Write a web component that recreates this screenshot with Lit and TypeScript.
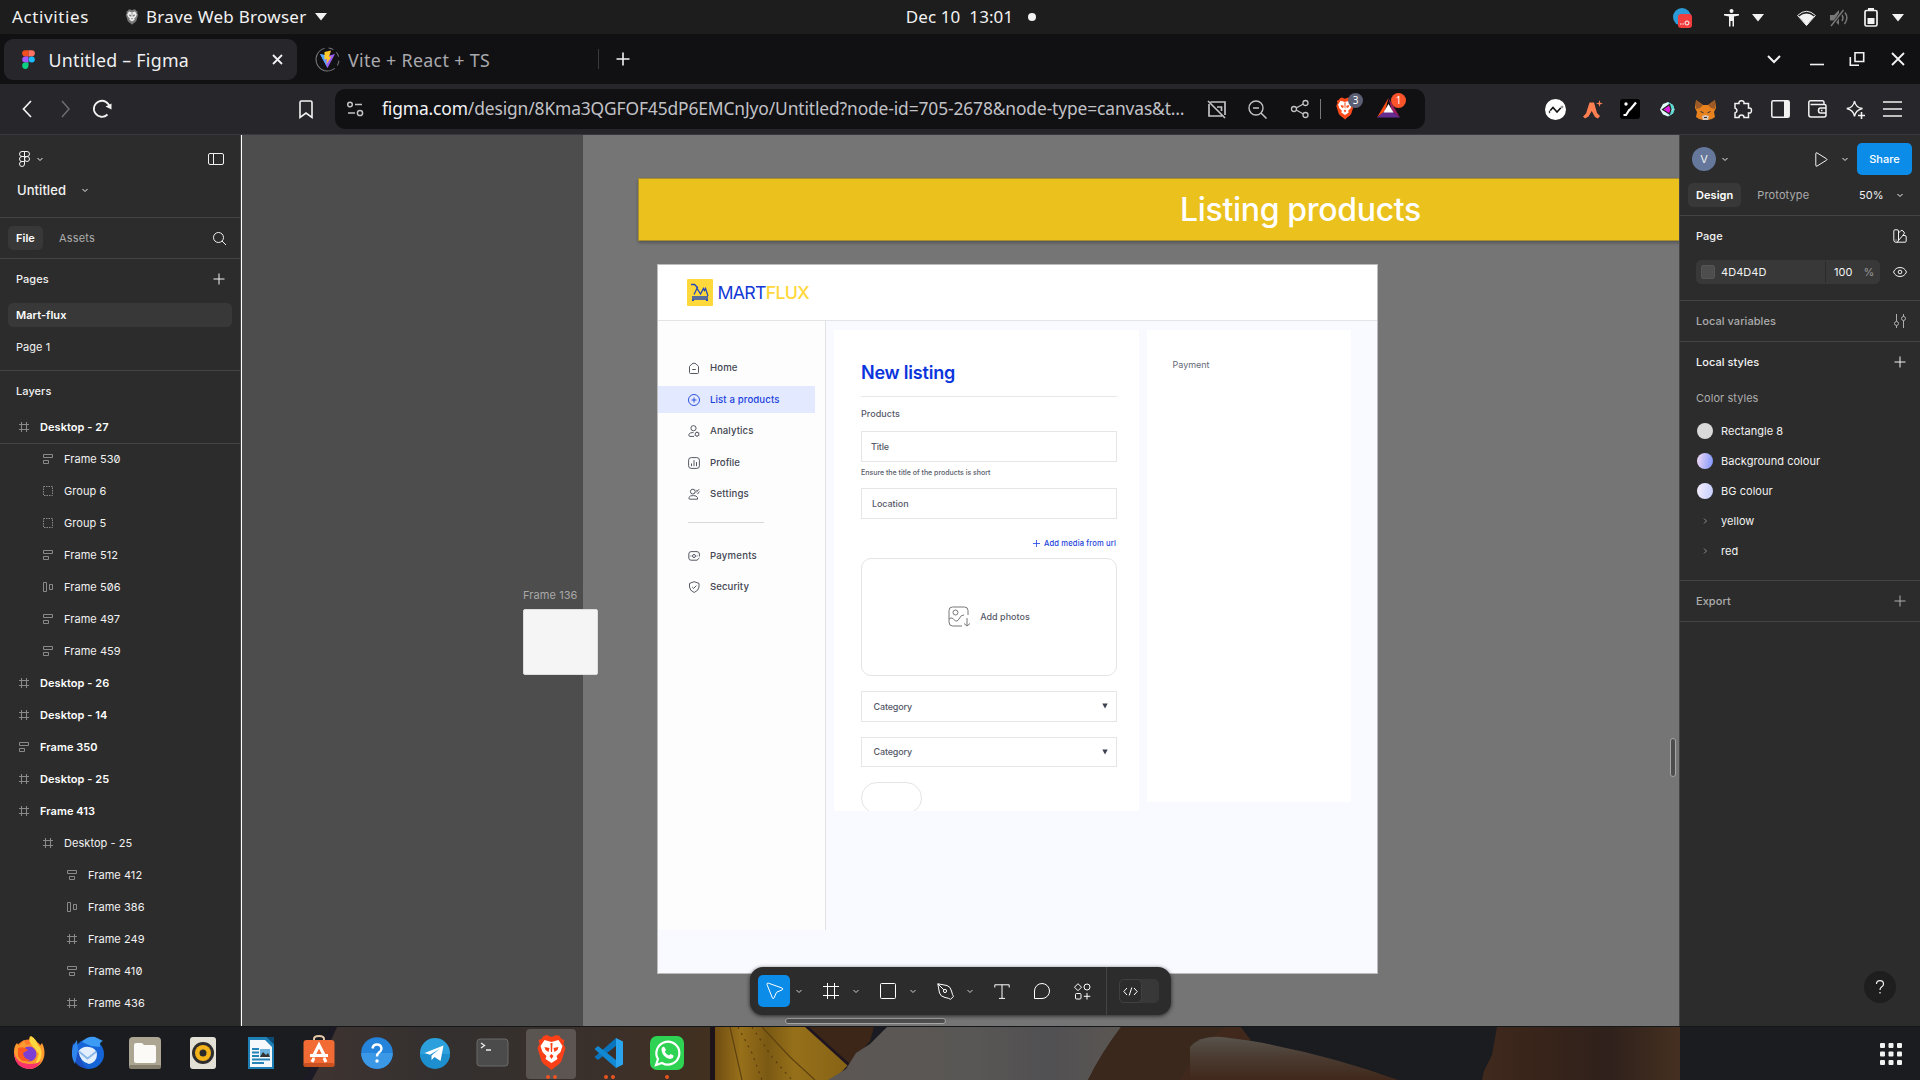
import { LitElement, html, css, svg, TemplateResult } from "lit";
import { customElement, property } from "lit/decorators.js";

/* Label that spreads its letters so that it fills a given width. */
@customElement("fit-text")
class FitText extends LitElement {
  @property({ type: Number }) w = 0;
  static styles = css`
    :host { display: inline-block; white-space: pre; flex-shrink: 0; }
  `;
  render() { return html`<slot></slot>`; }
  firstUpdated() {
    const n = (this.textContent || "").length;
    if (!this.w || !n) return;
    this.style.letterSpacing = "0px";
    const natural = this.getBoundingClientRect().width;
    this.style.letterSpacing = (this.w - natural) / n + "px";
  }
}

const ico = (w: number, h: number, body: TemplateResult | unknown, cls = "") =>
  html`<svg class="ico ${cls}" width=${w} height=${h} viewBox="0 0 ${w} ${h}" fill="none" stroke="currentColor">${body}</svg>`;

const chev = () => ico(8, 8, svg`<path d="M1.5 3 4 5.5 6.5 3"/>`, "chev");
const tri = () => ico(12, 8, svg`<path d="M0 0H12L6 7.5Z" fill="currentColor" stroke="none"/>`);
const plus = () => ico(12, 12, svg`<path d="M6 .5V11.5M.5 6H11.5"/>`, "plus");

const lion = (main: string, bg: string) => svg`
  <path d="M8 1 11 0 16 2 21 0 24 1 26 4 29 5 28 9 30 13 26 26C24 30 20 31 16 35 12 31 8 30 6 26L2 13 4 9 3 5 6 4Z" fill="${bg}" stroke="none"/>
  <path d="M9 5 16 7 23 5 27 11 25 17 21 21 22 24 16 28 10 24 11 21 7 17 5 11Z" fill="${main}" stroke="none"/>
  <path d="M9 12 14 13 13 17 10 15ZM23 12 18 13 19 17 22 15ZM14 21 16 19 18 21 16 24ZM15 8H17L16.6 17H15.4Z" fill="${bg}" stroke="none"/>`;
const brave = (w: number, h: number, main: string, bg: string) =>
  html`<svg class="ico" width=${w} height=${h} viewBox="0 0 32 35">${lion(main, bg)}</svg>`;

const layerIcons: Record<string, unknown> = {
  frame: svg`<path d="M2.500 0V10M7.500 0V10M0 2.500H10M0 7.500H10"/>`,
  left: svg`<path d="M.5 .5H9.500V3.500H.5ZM.5 6.500H5.500V9.500H.5Z"/>`,
  mid: svg`<path d="M.5 .5H9.500V3.500H.5ZM2.500 6.500H7.500V9.500H2.500Z"/>`,
  cols: svg`<path d="M.5 .5H3.500V9.500H.5ZM6.500 2.500H9.500V7.500H6.500Z"/>`,
  group: svg`<rect x=".5" y=".5" width="9" height="9" stroke-dasharray="1.500 1"/>`,
};

const layers: [string, string, number][] = [
  ["frame", "Desktop - 27", 0], ["left", "Frame 530", 1], ["group", "Group 6", 1],
  ["group", "Group 5", 1], ["left", "Frame 512", 1], ["cols", "Frame 506", 1],
  ["left", "Frame 497", 1], ["left", "Frame 459", 1], ["frame", "Desktop - 26", 0],
  ["frame", "Desktop - 14", 0], ["left", "Frame 350", 0], ["frame", "Desktop - 25", 0],
  ["frame", "Frame 413", 0], ["frame", "Desktop - 25", 1], ["mid", "Frame 412", 2],
  ["cols", "Frame 386", 2], ["frame", "Frame 249", 2], ["mid", "Frame 410", 2],
  ["frame", "Frame 436", 2],
];

const navIcons: Record<string, unknown> = {
  home: svg`<path d="M1.500 4.500 4 1.800Q6 .4 8 1.800L10.500 4.500V10.500Q10.500 11.500 9.500 11.500H2.500Q1.500 11.500 1.500 10.500ZM4.200 7.500H7.800"/>`,
  list: svg`<circle cx="6" cy="6" r="5.500"/><path d="M6 3.500V8.500M3.500 6H8.500"/>`,
  analytics: svg`<circle cx="5.500" cy="3.200" r="2.600"/><path d="M6 11.400H2Q.5 11.200 .8 9.400 2 7.200 5.500 7.600"/><circle cx="9" cy="9.200" r="1.900"/><path d="M9 6.600V7.300M9 11.100V11.800M11.200 8 10.600 8.300M7.400 10.100 6.800 10.400M11.200 10.400 10.600 10.100"/>`,
  profile: svg`<rect x=".6" y=".6" width="10.800" height="10.800" rx="2.600"/><path d="M3.500 9.200V6.500M6 9.200V3.200M8.500 9.200V5"/>`,
  settings: svg`<circle cx="4.800" cy="3.600" r="2.400"/><path d="M9.500 11.200H2Q.4 11 .9 9.500 2 7.200 5.500 7.600 8.500 7.400 9.500 9.600V11.200M8 4.600 11.200 1.200M8.200 1.800 9.400 3M9.400 6.200 11.400 3.600"/>`,
  payments: svg`<path d="M9 10.200H3Q.8 10 .8 8V4Q.8 1.800 3 1.600H9Q11.400 1.800 11.400 4V6.500M9 10.200 11.400 8"/><circle cx="6" cy="6" r="1.500"/><path d="M2.900 5.500V6.500M9.100 5.500V6.500"/>`,
  security: svg`<path d="M6.200 .7 11 2.400V6Q10.600 9.600 6.200 11.500 1.700 9.600 1.500 6V2.400ZM4.200 6 5.600 7.400 8.400 4.600"/>`,
};

const nav: [string, string, number][] = [
  ["home", "Home", 27.5], ["list", "List a products", 69.5], ["analytics", "Analytics", 43.5],
  ["profile", "Profile", 30], ["settings", "Settings", 39],
];
const nav2: [string, string, number][] = [["payments", "Payments", 47], ["security", "Security", 39]];

const dockApps: unknown[] = [
  // Firefox
  svg`<circle cx="18" cy="20" r="14.500" fill="#ff7a2a"/><path d="M19 2C24 6 27 9 28 13L31 9C36 18 34 31 22 34.500 11 36 3 29 3 18 3 14 4 11 6 9L8 12 13 6 15 11 20 10Q17 6 19 2Z" fill="#ff9a2e"/><path d="M20 2C27 6 26 11 29 13 32 19 31 27 24 31L28 20 20 10Q17 6 20 2Z" fill="#ffd83d"/><path d="M3 19Q6 30 18 30T31 25Q27 35 18 35 4 34 3 19Z" fill="#f9336b"/><circle cx="18" cy="20" r="7.500" fill="#7b3fd3"/><path d="M7 14Q13 12 17 16L12 19Q13 26 20 26 11 30 7 22Z" fill="#ff5a1f"/>`,
  // Thunderbird
  svg`<circle cx="20" cy="20" r="15" fill="#1565d8"/><path d="M4 9Q2 17 5 26 9 34 19 35 10 28 11 18Z" fill="#1b4fc4"/><path d="M13 8Q18 2 26 3L34 7Q30 8 31 13L22 12Z" fill="#3b9bf5"/><path d="M6 30Q1 22 4 12L8 6 9 16Z" fill="#2f86ee"/><path d="M9.500 17Q14 12 20 13 27 14 28 20 28 28 20 30 11 28 9.500 17Z" fill="#e3efff"/><path d="M10 17.500 18.500 24.500 27.500 17.500" stroke="#8cb8e8" stroke-width="2"/>`,
  // Files
  svg`<rect x="2" y="3" width="32" height="32" rx="4" fill="#aba592"/><rect x="2" y="31" width="32" height="4" rx="2" fill="#857f6e"/><path d="M7 11Q7 9 9 9H15L17 11H27Q29 11 29 13V27Q29 29 27 29H9Q7 29 7 27Z" fill="#fbfaf7"/>`,
  // Rhythmbox
  svg`<rect x="5" y="3" width="26" height="32" rx="3" fill="#e3e0d5"/><circle cx="18" cy="19" r="11" fill="#2f2d2d"/><circle cx="18" cy="19" r="8" fill="#f5b31a"/><circle cx="18" cy="19" r="3.500" fill="#2a2a2a"/>`,
  // Writer
  svg`<path d="M5 3H24L31 10V35H5Z" fill="#1d7fb5"/><path d="M7 6H22L29 13V33H7Z" fill="#f5f9fb"/><path d="M24 3H31V10Z" fill="#0a4b73"/><path d="M9 15H16M9 18.500H16M9 22H16M9 25.500H27M9 29H21" stroke="#2583b8" stroke-width="1.800"/><rect x="17" y="15" width="10" height="8" fill="#6db3dc"/><path d="M17 23 20 18 23 21 25 19 27 23Z" fill="#333"/>`,
  // Software
  svg`<path d="M13 8V5Q13 2 18 2T23 5V8" stroke="#e6c9a8" stroke-width="2"/><rect x="2.500" y="6" width="31" height="27" rx="3" fill="#f26a34"/><rect x="2.500" y="29" width="31" height="4" rx="2" fill="#c9501f"/><path d="M12 23 18 11 24 23" stroke="#fff" stroke-width="3.200"/><path d="M9 21.500H27M13 24 11 28M23 24 25 28" stroke="#fff" stroke-width="3"/>`,
  // Help
  svg`<circle cx="18" cy="19" r="15.800" fill="#2484dc"/><path d="M2.200 19A15.800 15.800 0 0 0 33.800 19Z" fill="#3b98e6"/><path d="M13.500 14.500Q14 10.500 18 10.500T22.500 14.500Q22.500 17 20 18.500 18 20 18 22.500" stroke="#fff" stroke-width="2.400"/><circle cx="18" cy="27" r="1.700" fill="#fff"/>`,
  // Telegram
  svg`<circle cx="18" cy="19" r="15" fill="#2ba0dc"/><path d="M3 20A15 15 0 0 0 33 20Z" fill="#1d8fce"/><path d="M7.500 19 26.500 11.500 23.500 27 17.500 23 14.500 26V21.500L23 14.500 13 20.800Z" fill="#fff"/>`,
  // Terminal
  svg`<rect x="2" y="5" width="31" height="27" rx="3" fill="#4c4b4c" stroke="#6b6a6a"/><path d="M6 9 9.500 11.500 6 14M11 16H16" stroke="#eee" stroke-width="1.300"/>`,
  // Brave
  svg`<g transform="translate(2.500,1)">${lion("#fff", "#fb4018")}</g>`,
  // VS Code
  svg`<path d="M25 4 32 7.500V30.500L25 34Z" fill="#2ba4ee"/><path d="M25 4V12L7 26 3.500 23Z" fill="#0a74bd"/><path d="M25 34V26L7 12 3.500 15Z" fill="#1287d2"/>`,
  // WhatsApp
  svg`<rect x="1" y="2" width="34" height="34" rx="7" fill="#2fd354"/><path d="M7 31 9 25A11.500 11.500 0 1 1 13 29Z" stroke="#fff" stroke-width="2.200"/><path d="M13.500 13Q15 12 16 14L17 16 15.800 17.800Q17 20.500 20 21.500L21.500 20 24.500 21.500Q24.800 24.500 21 25 14 23.500 12.500 16.500 12.300 14 13.500 13Z" fill="#fff"/>`,
];
const running: Record<number, number> = { 9: 2, 10: 2, 11: 1 };

@customElement("app-root")
class AppRoot extends LitElement {
  static styles = css`
    :host { display: block; width: 1920px; height: 1080px; overflow: hidden; background: #2c2c2c;
      font-family: "Noto Sans", "Open Sans", sans-serif; color: #f2f2f2; }
    * { box-sizing: border-box; }
    .ico { display: block; flex-shrink: 0; overflow: visible; }
    .row { display: flex; align-items: center; }
    .grow { flex: 1; }

    .sys { height: 34px; background: #1d1d1d; font-size: 17px; line-height: 34px; display: grid; grid-template-columns: 1fr auto 1fr; }
    .sys .left { padding-left: 12px; }
    .sys .brand { margin: 0 7px 0 28px; }
    .sys .left .ico:last-child { margin-left: 8px; }
    .sys .left, .sys .mid { padding-bottom: 1px; }
    .sys .mid { position: relative; left: 11px; gap: 15px; }
    .dot { width: 8px; height: 8px; border-radius: 4px; background: #f2f2f2; }
    .sys .right { justify-content: flex-end; padding-right: 16px; }
    .gap-person { margin-left: 31.500px; } .gap-tri { margin-left: 13.500px; } .gap-wifi { margin-left: 33px; }
    .gap-mute { margin-left: 13.500px; } .gap-batt { margin-left: 15.500px; } .gap-end { margin-left: 14px; }

    .tabs { height: 50px; background: #111114; font-size: 17.800px; padding-left: 4px; }
    .tabs fit-text { position: relative; top: .5px; }
    .tab { height: 41px; width: 293px; border-radius: 9px; background: #26262b; padding: 0 14px 0 18px; color: #f0f0f2; }
    .tab fit-text { margin-left: 13.500px; }
    .tab2 { width: 302px; height: 20px; padding-left: 18px; color: #a9a9ad; border-right: 1px solid #39393f; gap: 8px; }
    .newtab { margin-left: 17px; }
    .wins { padding-right: 15px; }

    .nav { height: 50px; background: #26262b; padding-left: 21px; }
    .nav .fwd { color: #6d6d72; margin-left: 24px; }
    .nav .rel { margin-left: 20px; }
    .nav .bm { margin-left: 187px; }
    .url { width: 1090px; height: 40px; margin-left: 22px; border-radius: 10px; background: #111114; padding-left: 12px; font-size: 17.400px; color: #c2c2c6; }
    .url fit-text { margin-left: 18px; position: relative; top: -1px; }
    .url b { color: #f4f4f6; font-weight: 400; }
    .u1 { margin-left: 22.500px; } .u2 { margin-left: 21px; } .u3 { margin-left: 24px; }
    .vsep { width: 1px; height: 20px; background: #77777c; margin-left: 11px; }
    .badged { position: relative; margin-left: 14px; width: 28px; height: 24px; }
    .badge { position: absolute; left: 13px; top: -4px; width: 15px; height: 15px; border-radius: 8px; background: #5c5f73; color: #fff; font-size: 10px; line-height: 15px; text-align: center; }
    .badge.red { background: #fb542b; left: 14px; }
    .exts { margin-left: 111.500px; }
    .ext { width: 37.500px; display: flex; justify-content: center; }

    .work { display: flex; height: 892px; border-top: 1px solid #38383e; font-family: Inter, sans-serif; font-size: 11px; letter-spacing: .05px; }
    .lp { width: 242px; background: #2c2c2c; border-right: 1px solid #fff; box-shadow: inset -1px 0 #444; }
    .lp .head { height: 83px; border-bottom: 1px solid #444; padding-right: 1px; }
    .l1 { height: 48px; padding: 0 16px 0 19px; }
    .l1 .chev { margin-left: 6px; }
    .l2 { height: 14px; padding-left: 17px; font-size: 13px; font-weight: 500; gap: 15px; }
    .ltabs { height: 41px; border-bottom: 1px solid #444; padding: 0 15px 0 8px; }
    .pill { height: 24px; border-radius: 5px; background: #383838; padding: 0 8px; line-height: 24px; font-weight: 600; color: #fff; }
    .dim { color: #adadad; }
    .ltabs .dim { margin-left: 16px; }
    .sec { height: 40px; padding: 0 16px; font-weight: 500; }
    .pages { height: 72px; border-bottom: 1px solid #444; padding-top: 4px; }
    .pages .pill { margin: 0 9px 4px 8px; }
    .pages .pg { height: 32px; line-height: 32px; padding-left: 16px; }
    .layer { height: 32px; padding-left: 19px; gap: 11px; }
    .layer .ico { color: #8a8a8a; }
    .layer.d0 { font-weight: 600; color: #fff; }
    .layer.d1 { padding-left: 43px; } .layer.d2 { padding-left: 67px; }
    .layer.top { box-shadow: 0 1px #444; margin-right: 1px; }
    .zero { font-feature-settings: "zero"; }

    .canvas { position: relative; flex: 1; overflow: hidden; background: #4d4d4d; letter-spacing: 0; }
    .board { position: absolute; left: 341px; top: 0; right: 0; bottom: 0; background: #757575; }
    .banner { position: absolute; left: 396px; top: 43px; width: 1325px; height: 63px; background: #ebc11d; border: 1px solid #a98f2b; box-shadow: 0 2px 3px #0004; display: flex; justify-content: center; align-items: center; color: #fff; font-size: 32px; font-weight: 500; }
    .f136 { position: absolute; left: 281px; top: 452px; color: #a8a8a8; }
    .f136 .lbl { height: 22px; line-height: 16px; display: block; }
    .f136 .box { width: 75px; height: 66px; background: #f5f5f5; border: 1px solid #dedede; border-radius: 2px; }
    .vbar, .hbar { position: absolute; background: #4d4d4d; border: 1px solid #a5a5a5; border-radius: 4px; }
    .vbar { right: 3px; top: 603px; width: 6px; height: 39px; }
    .hbar { left: 543px; top: 883px; width: 161px; height: 6px; }

    .desk { position: absolute; left: 415px; top: 129px; width: 721px; height: 710px; border: 1px solid #bcbcbc; background: #f8faff; color: #565a69; font-weight: 500; }
    .dh { height: 56px; background: #fff; border-bottom: 1px solid #e4e4e6; padding: 0 0 0 29px; font-size: 17.800px; font-weight: 400; gap: 4.500px; }
    .dh .y { color: #ffd83b; font-weight: 500; } .dh .b { color: #1238d6; }
    .db { display: flex; align-items: flex-start; }
    .side { width: 168px; height: 609px; background: #fdfdfd; border-right: 1px solid #e2e2e4; padding-top: 33px; font-size: 9.600px; color: #434653; }
    .ni { height: 31.500px; }
    .ni > div { display: flex; align-items: center; width: 157px; height: 27.500px; padding-left: 30px; gap: 10px; }
    .ni .ico { margin-top: 1px; stroke-width: .9; }
    .ni.on > div { background: #e3e9ff; color: #1b42dd; }
    .side hr { border: 0; height: 1px; background: #d8d8da; width: 76px; margin: 10px 0 19px 30px; }
    .card { background: #fff; margin-top: 9px; margin-left: 8px; overflow: hidden; font-size: 9px; }
    .c1 { width: 305px; height: 481px; padding: 0 22px 0 27px; }
    .c2 { width: 204px; height: 472px; padding: 28px 25px 0 25.500px; font-weight: 400; line-height: 14px; color: #666a77; }
    .ttl { height: 67px; border-bottom: 1px solid #e8e8ea; padding-top: 20px; line-height: 46px; font-size: 18px; font-weight: 600; color: #0a35dd; }
    .lab { height: 34px; line-height: 34px; display: block; }
    .inp { height: 31px; border: 1px solid #e6e6e8; padding: 0 8px 1px 9px; }
    .inp.loc { padding-left: 10px; }
    .hint { height: 26px; line-height: 22px; font-size: 7px; }
    .addm { height: 39px; padding-top: 9px; padding-right: 1px; justify-content: flex-end; color: #1b42dd; font-size: 7.600px; gap: 4px; }
    .photo { height: 118px; border: 1px solid #e4e4e6; border-radius: 10px; justify-content: center; gap: 10px; padding-bottom: 2px; }
    .photo .ico { color: #777; }
    .inp.pick { margin-top: 15px; padding: 0 8px 1px 11.500px; }
    .inp.short { height: 30px; }
    .blank { margin-top: 15px; width: 61px; height: 32px; border: 1px solid #e4e4e6; border-radius: 16px; }

    .tools { position: absolute; left: 508px; top: 832px; width: 421px; height: 48px; border-radius: 13px; background: #2c2c2c; box-shadow: 0 1px 4px #000a; display: flex; align-items: center; padding-left: 8px; color: #fff; }
    .tool { width: 32px; height: 32px; border-radius: 5px; display: flex; align-items: center; justify-content: center; }
    .tool.on { background: #0c8ce9; padding-left: 1px; }
    .tools .chev { margin: 0 12.500px 0 4.500px; color: #d0d0d0; }
    .tools .tool + .tool { margin-left: 8px; }
    .tsep { width: 1px; height: 48px; background: #444; margin: 0 12px 0 8px; }
    .tog { width: 40px; height: 24px; border-radius: 5px; background: #383838; }
    .knob { width: 23px; height: 24px; border-radius: 5px; background: #2c2c2c; border: 1px solid #404040; display: flex; align-items: center; justify-content: center; }

    .rp { width: 241px; background: #2c2c2c; border-left: 1px solid #444; position: relative; }
    .r1 { height: 48px; padding: 0 8px 0 12px; }
    .ava { width: 24px; height: 24px; border-radius: 12px; background: #66779c; line-height: 24px; text-align: center; margin-right: 5px; }
    .share { margin-left: 8px; width: 55px; height: 32px; border-radius: 5px; background: #0c8ce9; line-height: 32px; text-align: center; color: #fff; font-weight: 500; }
    .r1 .play { margin-right: 13px; }
    .r2 { height: 33px; border-bottom: 1px solid #444; padding: 0 16px 9px 8px; }
    .r2 .dim { margin-left: 16px; }
    .r2 .chev { margin-left: 12.500px; }
    .rs { height: 40px; padding: 0 13px 0 16px; font-weight: 500; }
    .rs.b { border-bottom: 1px solid #444; height: 41px; }
    .rs .plus { margin-right: 1.500px; }
    .rs .vars { margin-right: 1px; }
    .fill { height: 45px; border-bottom: 1px solid #444; padding: 0 13px 0 16px; align-items: flex-start; }
    .fld { width: 184px; height: 24px; border-radius: 5px; background: #383838; padding-left: 5px; margin-top: 4px; }
    .sw { width: 14px; height: 14px; background: #4d4d4d; border-radius: 2px; margin-right: 6px; border: 1px solid #555; }
    .hex { width: 105px; height: 22px; line-height: 22px; border-right: 1px solid #2c2c2c; margin-right: 8px; }
    .pct { margin-left: 11px; color: #999; }
    .fill .ico { margin: 11px 0 0 13px; }
    .st { height: 30px; padding-left: 17px; gap: 8px; }
    .st.cap { padding-left: 16px; margin: 1px 0 3px; }
    .disc { width: 16px; height: 16px; border-radius: 8px; background: #d9d9d9; }
    .disc.bg1 { background: linear-gradient(100deg, #f6dcf3, #7b94ff); }
    .disc.bg2 { background: linear-gradient(100deg, #f8eefa, #c2cdff); }
    .disc.none { background: none; display: flex; align-items: center; justify-content: center; color: #8a8a8a; }
    .styleset { border-bottom: 1px solid #444; padding-bottom: 14px; }
    .help { position: absolute; right: 24px; bottom: 23px; width: 32px; height: 32px; border-radius: 16px; background: #1e1e1e; display: flex; align-items: center; justify-content: center; }

    .dock { position: relative; height: 54px; background: #1a1c20; border-top: 1px solid #15181a; }
    .wall { position: absolute; inset: 0; display: block; }
    .apps { position: relative; display: flex; height: 53px; align-items: center; }
    .app { position: relative; width: 58px; height: 50px; display: flex; align-items: center; justify-content: center; }
    .app.on::before { content: ""; position: absolute; left: 4px; top: 0; width: 50px; height: 50px; border-radius: 4px; background: #ffffff2e; }
    .app .ico { position: relative; top: -1px; }
    .run { position: absolute; bottom: 0; left: 0; right: 0; display: flex; justify-content: center; gap: 3px; }
    .run i { width: 4px; height: 4px; border-radius: 2px; background: #e95420; }
    .gridbtn { margin-left: auto; margin-right: 18px; }
  `;

  private navRow([i, t, w]: [string, string, number]) {
    return html`<div class="ni ${i === "list" ? "on" : ""}"><div>${ico(12, 12, navIcons[i])}<fit-text .w=${w}>${t}</fit-text></div></div>`;
  }

  private system() {
    return html`<div class="sys">
      <div class="row left"><fit-text .w=${77}>Activities</fit-text>
        <span class="brand">${brave(14, 18, "#eee", "#777")}</span><fit-text .w=${160.5}>Brave Web Browser</fit-text>${tri()}</div>
      <div class="row mid"><fit-text .w=${107.5}>Dec 10  13:01</fit-text><span class="dot"></span></div>
      <div class="row right">
        ${ico(19, 20, svg`<circle cx="9" cy="9" r="9" fill="#2a9bd8" stroke="none"/><rect x="5" y="6" width="14" height="14" rx="3" fill="#f13d3d" stroke="none"/><circle cx="14" cy="15" r="2" stroke="#fff"/><path d="M7 16H11" stroke="#fff" stroke-dasharray="1 .6"/>`)}
        <span class="gap-person"></span>${ico(15, 18, svg`<circle cx="7.500" cy="2" r="2" fill="currentColor" stroke="none"/><path d="M0 5H15V6.500L10 7.500V17.500H8.500V12H6.500V17.500H5V7.500L0 6.500Z" fill="currentColor" stroke="none"/>`)}
        <span class="gap-tri"></span>${tri()}
        <span class="gap-wifi"></span>${ico(19, 16, svg`<path d="M9.500 15.500 2 6.500Q9.500 .5 17 6.500Z" fill="currentColor" stroke="none"/><path d="M.6 5.500Q9.500-3 18.400 5.500L9.500 15.500Z"/>`)}
        <span class="gap-mute"></span>${ico(19, 18, svg`<g stroke="#777" stroke-width="1.500"><path d="M0 6H4L9 1V16L4 11.500H0Z" fill="#777" stroke="none"/><path d="M12 6Q14 9 12 12M15 3.500Q19 9 14.500 15"/><path d="M14 0 1 18" stroke="#1d1d1d" stroke-width="3"/><path d="M13.500 1 1 17"/></g>`)}
        <span class="gap-batt"></span>${ico(14, 19, svg`<rect x="1" y="2.500" width="12" height="15.500" rx="1.500" stroke-width="1.700"/><rect x="4" y="0" width="6" height="2" fill="currentColor" stroke="none"/><rect x="3.500" y="10" width="7" height="6" fill="currentColor" stroke="none"/>`)}
        <span class="gap-end"></span>${tri()}
      </div></div>`;
  }

  private tabs() {
    return html`<div class="row tabs">
      <div class="row tab">
        <svg class="ico" width="13" height="19" viewBox="0 0 14 20"><path d="M3.500 0H7V6.700H3.500A3.350 3.350 0 0 1 3.500 0Z" fill="#f24e1e"/><path d="M7 0H10.500A3.350 3.350 0 0 1 10.500 6.700H7Z" fill="#ff7262"/><path d="M3.500 6.700H7V13.300H3.500A3.300 3.300 0 0 1 3.500 6.700Z" fill="#a259ff"/><circle cx="10.500" cy="10" r="3.300" fill="#1abcfe"/><path d="M3.500 13.300H7V16.700A3.400 3.400 0 1 1 3.500 13.300Z" fill="#0acf83"/></svg>
        <fit-text .w=${140.5}>Untitled – Figma</fit-text><span class="grow"></span>
        ${ico(11, 11, svg`<path d="M1 1 10 10M10 1 1 10" stroke-width="1.800"/>`)}
      </div>
      <div class="row tab2">
        ${ico(25, 25, svg`<circle cx="12.500" cy="12.500" r="11.500" stroke="#77777c" stroke-dasharray="36 4 5 4 5 4 5 4 5" transform="rotate(75 12.500 12.500)"/><path d="M5 7 12.500 21 20 7 12.500 9Z" fill="#9a5cf5" stroke="none"/><path d="M5 7 12 20 10 8Z" fill="#52a8ff" stroke="none"/><path d="M16 3.500 9.500 5 9.500 12.500 12 12 11.500 17 16.500 9.500 14 10Z" fill="#ffc92e" stroke="none"/>`)}
        <fit-text .w=${142}>Vite + React + TS</fit-text>
      </div>
      <span class="newtab">${ico(14, 14, svg`<path d="M7 .5V13.500M.5 7H13.500" stroke-width="1.600"/>`)}</span>
      <span class="grow"></span>
      <div class="row wins">
        ${ico(137, 14, svg`<path d="M0 4 6 10 12 4" stroke-width="2"/><path d="M42 12.500H56" stroke-width="1.600"/><path d="M87 .8H95.700V9.500H87ZM82.300 5V13.200H91" stroke-width="1.600"/><path d="M124 1 136 13M136 1 124 13" stroke-width="1.800"/>`)}
      </div></div>`;
  }

  private navbar() {
    const fox = svg`<path d="M1 1 8 6H13L20 1 21 9 19 13 20 18 17 20 13 21H8L4 20 1 18 2 13 0 9Z" fill="#e8821e" stroke="none"/><path d="M1 1 8 6 5 9 1 10ZM20 1 13 6 16 9 20 10Z" fill="#9c5a26" stroke="none"/><path d="M7 17 10.500 16 14 17 13 21H8Z" fill="#d8c8bb" stroke="none"/><path d="M5.500 12.500 8.500 13.800M15.500 12.500 12.500 13.800M9 18.500H12" stroke="#26313c"/>`;
    const exts = [
      ico(21, 21, svg`<circle cx="10.500" cy="10.500" r="10.500" fill="#fff" stroke="none"/><path d="M4 13 8 8.500 12 13 17 7.500" stroke="#111" stroke-width="1.600"/><circle cx="4.500" cy="13" r="1.300" fill="#111"/><circle cx="17" cy="8" r="1.300" fill="#111"/>`),
      ico(20, 19, svg`<path d="M0 16.500 3 13.500 6.500 2.500H11L14 13 17 16 15 18.500 12 17 8.700 11 5.500 16.500 2 18.500ZM16.500 0 17.300 2.700 20 3.500 17.300 4.300 16.500 7 15.700 4.300 13 3.500 15.700 2.700Z" fill="#ff7f50" stroke="none"/>`),
      ico(20, 20, svg`<rect width="20" height="20" rx="3" fill="#000" stroke="none"/><path d="M3.500 16H6L9.500 10.500M9 11.500 11 9.500 16 3.500" stroke="#fff" stroke-width="2.200"/><circle cx="6" cy="5" r="1.700" fill="#fff" stroke="none"/>`),
      ico(15, 15, svg`<path d="M0 7.500 3 2 8 0 13 3 14.500 7.500 13 11.500 8 14.500 3 12.500Z" fill="#dffaf8" stroke="none"/><path d="M8 0 13 3 14.500 7.500 11 7.500ZM14.500 7.500 13 11.500 8 14.500 11 9Z" fill="#58d9d4" stroke="none"/><path d="M2.500 7.500 9.500 2.500 11 7.500 9.500 12Z" fill="#e01ce0" stroke="#222" stroke-width="1.200"/>`),
      ico(21, 21, fox),
      ico(19, 19, svg`<path d="M2 3.500H6Q5.500 .8 8.500 .8T11 3.500H15.500V8Q18.500 7.500 18.500 10.500T15.500 13V17.500H11Q11 15 8.500 15T6 17.500H2V13Q4 12 4 10.500T2 8Z" stroke-width="1.500"/>`),
      ico(19, 18, svg`<rect x=".8" y=".8" width="17.400" height="16.400" rx="1.500" stroke-width="1.500"/><path d="M13 1H18V17H13Z" fill="currentColor" stroke="none"/>`),
      ico(19, 18, svg`<path d="M16 4V2.500Q16 .8 14.300 .8H2.500Q.8 .8 .8 2.500V14.500Q.8 17 3 17H16Q18 17 18 15V6Q18 4.500 16.500 4.500H2.500M18 8H12.500Q10.500 8 10.500 10.500T12.500 13H18M13 10.500H14.500" stroke-width="1.500"/>`),
      ico(19, 19, svg`<path d="M8.500 1Q9.500 7.500 16.500 8.500 9.500 10 8.500 16.500 7.500 10 .8 8.500 7.500 7.500 8.500 1Z" stroke-width="1.400"/><path d="M15.500 12V19M12 15.500H19" stroke-width="1.600"/>`),
      ico(19, 16, svg`<path d="M0 1H19M0 8H19M0 15H19" stroke-width="1.600"/>`),
    ];
    return html`<div class="row nav">
      ${ico(12, 18, svg`<path d="M10 1 2.500 9 10 17" stroke-width="1.700"/>`)}
      <span class="fwd">${ico(16, 18, svg`<path d="M5 1 12 9 5 17" stroke-width="1.500"/>`)}</span>
      <span class="rel">${ico(19, 18, svg`<path d="M14.500 14.500A8 8 0 1 1 16.800 7.500" stroke-width="1.800"/><path d="M12.500 6.500 18.500 9.500 18.500 3.500Z" fill="currentColor" stroke="none"/>`)}</span>
      <span class="bm">${ico(14, 19, svg`<path d="M1 2.500Q1 1 2.500 1H11.500Q13 1 13 2.500V17.500L7 13 1 17.500Z" stroke-width="1.600"/>`)}</span>
      <div class="row url">
        ${ico(17, 16, svg`<circle cx="3" cy="3.500" r="2.300" stroke-width="1.500"/><circle cx="13" cy="12" r="2.600" stroke-width="1.500"/><path d="M8 3.500H15M1 12H8" stroke-width="1.500"/>`)}
        <fit-text .w=${802.5}><b>figma.com</b>/design/8Kma3QGFOF45dP6EMCnJyo/Untitled?node-id=705-2678&amp;node-type=canvas&amp;t…</fit-text>
        <span class="u1">${ico(20, 18, svg`<path d="M3.500 2H18V15M2 4V16H15M1 1 18 18M10 7H14.500V11" stroke-width="1.700"/>`)}</span>
        <span class="u2">${ico(19, 19, svg`<circle cx="8" cy="8" r="7" stroke-width="1.400"/><path d="M13 13 18.500 18.500M5 8H11" stroke-width="1.500"/>`)}</span>
        <span class="u3">${ico(18, 18, svg`<g stroke-width="1.300"><circle cx="3" cy="9" r="2.500"/><circle cx="14.500" cy="3" r="2.500"/><circle cx="14.500" cy="15" r="2.500"/><path d="M5.200 8 12.300 4M5.200 10 12.300 14"/></g>`)}</span>
        <span class="vsep"></span>
        <span class="badged">${brave(20, 23, "#fff", "#fb4a1a")}<span class="badge">3</span></span>
        <span class="badged">${ico(23, 21, svg`<path d="M11.500 1 0 20.500 8 14Z" fill="#ff4b12" stroke="none"/><path d="M0 20.500H23L15 14H8Z" fill="#662d91" stroke="none"/><path d="M11.500 1 23 20.500 15 14Z" fill="#9e1f63" stroke="none"/><path d="M11.500 7 16.500 15.500H6.500Z" fill="#fff" stroke="none"/>`)}<span class="badge red">1</span></span>
      </div>
      <div class="row exts">${exts.map((e) => html`<span class="ext">${e}</span>`)}</div>
    </div>`;
  }

  private leftPanel() {
    return html`<div class="lp">
      <div class="head">
        <div class="row l1">
          ${ico(11, 16, svg`<path d="M3 .5H5.500V5.500H3A2.500 2.500 0 0 1 3 .5ZM5.500 .5H8A2.500 2.500 0 0 1 8 5.500H5.500ZM3 5.500H5.500V10.500H3A2.500 2.500 0 0 1 3 5.500ZM3 10.500H5.500V13A2.500 2.500 0 1 1 3 10.500Z"/><circle cx="8" cy="8" r="2.500"/>`)}
          ${chev()}<span class="grow"></span>
          ${ico(16, 12, svg`<rect x=".5" y=".5" width="15" height="11" rx="1.500"/><path d="M5.500 .5V11.500"/>`)}
        </div>
        <div class="row l2"><fit-text .w=${49}>Untitled</fit-text>${chev()}</div>
      </div>
      <div class="row ltabs"><span class="pill">File</span><fit-text class="dim" .w=${36}>Assets</fit-text><span class="grow"></span>
        ${ico(13, 13, svg`<circle cx="5.500" cy="5.500" r="5"/><path d="M9 9 13 13"/>`)}</div>
      <div class="row sec">Pages<span class="grow"></span>${plus()}</div>
      <div class="pages"><div class="pill">Mart-flux</div><div class="pg">Page 1</div></div>
      <div class="row sec">Layers</div>
      ${layers.map(([i, t, d], k) => html`<div class="row layer d${d} ${k === 0 ? "top" : ""} ${d ? "zero" : ""}">${ico(10, 10, layerIcons[i])}<span>${t}</span></div>`)}
    </div>`;
  }

  private canvas() {
    return html`<div class="canvas">
      <div class="board"></div>
      <div class="f136"><span class="lbl"><fit-text .w=${54.5}>Frame 136</fit-text></span><div class="box"></div></div>
      <div class="banner"><fit-text .w=${241}>Listing products</fit-text></div>
      <div class="desk">
        <div class="row dh">
          ${ico(26, 27, svg`<rect width="26" height="27" rx="1" fill="#ffd83b" stroke="none"/><g stroke="#2448b8" stroke-width="1.300"><path d="M4 5.500H7.500L10.500 8.500 7 15.500M9.500 8.500 13.500 15 16.500 9.500 17.500 11.500 18.500 9.500 21 17M5 18H21M5 20H21"/></g><path d="M5 20.500H7V22H5ZM19 20.500H21V22H19Z" fill="#2448b8" stroke="none"/>`)}
          <fit-text .w=${91.5}><span class="b">MART</span><span class="y">FLUX</span></fit-text>
        </div>
        <div class="db">
          <div class="side">${nav.map((n) => this.navRow(n))}<hr />${nav2.map((n) => this.navRow(n))}</div>
          <div class="card c1">
            <div class="ttl"><fit-text .w=${94}>New listing</fit-text></div>
            <span class="lab"><fit-text .w=${39}>Products</fit-text></span>
            <div class="row inp"><fit-text .w=${18}>Title</fit-text></div>
            <div class="hint"><fit-text .w=${129.5}>Ensure the title of the products is short</fit-text></div>
            <div class="row inp loc"><fit-text .w=${36.5}>Location</fit-text></div>
            <div class="row addm">${ico(7, 7, svg`<path d="M3.500 0V7M0 3.500H7" stroke-width=".8"/>`)}<fit-text .w=${72}>Add media from url</fit-text></div>
            <div class="row photo">
              ${ico(22, 21, svg`<path d="M20 9V4.500Q20 1 16.500 1H4.500Q1 1 1 4.500V16Q1 20 4.500 20H14"/><circle cx="7.500" cy="6.500" r="2.500"/><path d="M1 13Q3 11 5 12.500L7.500 15Q9 16 11 13 13 8.500 16 9M19 12V20M16 17.500 19 20 22 17.500"/>`)}
              <fit-text .w=${49.5}>Add photos</fit-text>
            </div>
            ${["", "short"].map((c) => html`<div class="row inp pick ${c}"><fit-text .w=${38.5}>Category</fit-text><span class="grow"></span>${ico(6, 6, svg`<path d="M.3 .5H5.700L3 5.500Z" fill="#3f4250" stroke="none"/>`)}</div>`)}
            <div class="blank"></div>
          </div>
          <div class="card c2"><fit-text .w=${37}>Payment</fit-text></div>
        </div>
      </div>
      <div class="vbar"></div><div class="hbar"></div>
      <div class="tools">
        <span class="tool on">${ico(18, 18, svg`<path d="M1 2.500Q.6 .8 2.500 1.200L16 6Q17.800 6.800 16.200 7.800L10.500 10.300 8 16Q7.200 17.600 6.400 16Z"/>`)}</span>${chev()}
        <span class="tool">${ico(16, 16, svg`<path d="M4.500 0V16M11.500 0V16M0 3.500H16M0 12.500H16"/>`)}</span>${chev()}
        <span class="tool">${ico(16, 16, svg`<rect x=".5" y=".5" width="15" height="15" rx="1"/>`)}</span>${chev()}
        <span class="tool">${ico(17, 17, svg`<path d="M.8 .8 10 2.500Q13.500 3.500 14.500 8L15.500 11.500 16.500 13.500 13.500 16.300 11.500 15.300 8 14.500Q3.500 13.500 2.500 10ZM.8 .8 6.800 6.800"/><circle cx="8" cy="8" r="1.600"/>`)}</span>${chev()}
        <span class="tool">${ico(16, 15, svg`<path d="M.8 3.500V.8H15.200V3.500M8 .8V14.300M5 14.400H11"/>`)}</span>
        <span class="tool">${ico(16, 16, svg`<path d="M8 .5A7.500 7.500 0 0 1 8 15.500H.5V8A7.500 7.500 0 0 1 8 .5Z"/>`)}</span>
        <span class="tool">${ico(17, 17, svg`<path d="M4 .7 7.500 4.200 4 7.700 .5 4.200Z"/><circle cx="13" cy="4" r="3"/><rect x="1.500" y="10.500" width="5.500" height="5.500" rx="1"/><path d="M13 10V16.500M9.800 13.300H16.300"/>`)}</span>
        <span class="tsep"></span>
        <div class="tog"><div class="knob">${ico(15, 9, svg`<path d="M4 1 .8 4.500 4 8M11 1 14.200 4.500 11 8M8.800 .5 6.200 8.500"/>`)}</div></div>
      </div>
    </div>`;
  }

  private rightPanel() {
    return html`<div class="rp">
      <div class="row r1"><span class="ava">V</span>${chev()}<span class="grow"></span>
        <span class="play">${ico(13, 15, svg`<path d="M.8 1.800Q.8 .3 2 .9L11.500 6.800Q12.500 7.500 11.500 8.200L2 14.100Q.8 14.700 .8 13.200Z"/>`)}</span>${chev()}<span class="share">Share</span></div>
      <div class="row r2"><span class="pill">Design</span><fit-text class="dim" .w=${52}>Prototype</fit-text><span class="grow"></span><span>50%</span>${chev()}</div>
      <div class="row rs">Page<span class="grow"></span>${ico(14, 14, svg`<path d="M.8 2Q.8 .8 2 .8H4Q5.500 .8 5.500 2V11A2.300 2.300 0 0 1 .8 11ZM5.500 4 8 1.500Q9 1 10 2L11 3Q11.800 4 11 5L5.500 11.500M10 6.500H12Q13.200 6.500 13.200 8V12Q13.200 13.200 12 13.200H3.500"/><path d="M3 10.500V11.500"/>`)}</div>
      <div class="row fill"><div class="row fld"><span class="sw"></span><span class="hex">4D4D4D</span><span>100</span><span class="pct">%</span></div>
        ${ico(14, 10, svg`<path d="M.5 5Q2.500 .5 7 .5T13.500 5Q11.500 9.500 7 9.500T.5 5Z"/><circle cx="7" cy="5" r="1.800"/>`)}</div>
      <div class="row rs b dim">Local variables<span class="grow"></span>${ico(12, 14, svg`<path d="M2.500 0V7.500M2.500 11.500V14M9.500 0V2.500M9.500 6.500V14"/><circle cx="2.500" cy="9.500" r="2"/><circle cx="9.500" cy="4.500" r="2"/>`, "vars")}</div>
      <div class="row rs">Local styles<span class="grow"></span>${plus()}</div>
      <div class="styleset"><div class="row st cap"><span class="dim">Color styles</span></div>
        <div class="row st"><i class="disc"></i>Rectangle 8</div>
        <div class="row st"><i class="disc bg1"></i>Background colour</div>
        <div class="row st"><i class="disc bg2"></i>BG colour</div>
        ${["yellow", "red"].map((t) => html`<div class="row st"><i class="disc none">${ico(8, 8, svg`<path d="M3 1.500 5.500 4 3 6.500"/>`)}</i>${t}</div>`)}
      </div>
      <div class="row rs b dim">Export<span class="grow"></span>${plus()}</div>
      <div class="help">${ico(10, 14, svg`<path d="M1.500 4Q1.500 .7 5 .7T8.500 4Q8.500 6 6.500 7 5 8 5 10M5 12V13.500" stroke-width="1.200"/>`)}</div>
    </div>`;
  }

  private dock() {
    return html`<div class="dock">
      <svg class="wall" width="1920" height="53" viewBox="0 0 1920 53" preserveAspectRatio="none">
        <defs>
          <linearGradient id="a" gradientUnits="userSpaceOnUse" x1="305" y1="0" x2="715" y2="0"><stop offset="0" stop-color="#3f3431"/><stop offset=".35" stop-color="#33302f"/><stop offset=".7" stop-color="#3a302b"/><stop offset="1" stop-color="#42301f"/></linearGradient>
          <linearGradient id="b"><stop offset="0" stop-color="#6f4c12"/><stop offset=".2" stop-color="#98701a"/><stop offset=".4" stop-color="#7a5913"/><stop offset=".6" stop-color="#967019"/><stop offset="1" stop-color="#876316"/></linearGradient>
          <linearGradient id="c" x1="0" y1="0" x2="0" y2="1"><stop offset="0" stop-color="#58534c"/><stop offset=".5" stop-color="#4a3a30"/><stop offset="1" stop-color="#40281b"/></linearGradient>
          <linearGradient id="d"><stop offset="0" stop-color="#40291d"/><stop offset=".3" stop-color="#38241a"/><stop offset=".65" stop-color="#2f211c"/><stop offset="1" stop-color="#463020"/></linearGradient>
          <linearGradient id="e"><stop offset="0" stop-color="#5c5754"/><stop offset=".5" stop-color="#595755"/><stop offset=".75" stop-color="#515052"/><stop offset="1" stop-color="#5a5653"/></linearGradient>
        </defs>
        <path d="M335 0H715V53H305Z" fill="url(#a)"/>
        <path d="M1100 0H1241L1250 12 1240 53H1080Z" fill="#40291c"/>
        <path d="M331 0H337L320 38 312 53H303Z" fill="#1c1a24"/>
        <path d="M714 0H807L848 38 834 53H714Z" fill="url(#b)"/>
        <path d="M730 0 742 53M762 0 790 30 815 53" stroke="#5f4211" stroke-width="1.200" fill="none"/>
        <path d="M738 0 752 26 762 53M752 0 772 30 792 53" stroke="#5a3c10" stroke-width="1.200" stroke-dasharray="2 5" fill="none"/>
        <path d="M710 0H715V53H710Z" fill="#1e1318"/>
        <path d="M805 0H810L850 36 848 39Z" fill="#1f1520"/>
        <path d="M809 0H874L870 14 850 37Z" fill="#3c2618"/>
        <path d="M874 0H887L872 15Z" fill="#1a1a22"/>
        <path d="M887 0H1121Q1100 28 1088 53H828L846 42 856 26 870 17Z" fill="url(#e)"/>
        <path d="M1121 0H1225Q1200 18 1180 53H1088Q1100 28 1121 0Z" fill="#39281b"/>
        <path d="M1241 0H1500V53H1396Q1330 22 1252 14Z" fill="#1a1c20"/>
        <path d="M1190 20Q1200 8 1222 10L1252 14Q1330 28 1398 53H1190Z" fill="url(#c)"/>
        <path d="M1497 0H1680V53H1482L1484 44 1492 28Z" fill="url(#d)"/>
      </svg>
      <div class="apps">
        ${dockApps.map((a, i) => html`<span class="app ${i === 9 ? "on" : ""}">
          <svg class="ico" width="36" height="37" viewBox="0 0 36 37" fill="none">${a}</svg>
          <span class="run">${Array.from({ length: running[i] || 0 }, () => html`<i></i>`)}</span></span>`)}
        <span class="gridbtn">${ico(22, 22, svg`${[0, 8.5, 17].map((y) => [0, 8.5, 17].map((x) => svg`<rect x=${x} y=${y} width="5" height="5" rx="1" fill="#f2f2f2" stroke="none"/>`))}`)}</span>
      </div>
    </div>`;
  }

  render() {
    return html`${this.system()}${this.tabs()}${this.navbar()}
      <div class="work">${this.leftPanel()}${this.canvas()}${this.rightPanel()}</div>${this.dock()}`;
  }
}
